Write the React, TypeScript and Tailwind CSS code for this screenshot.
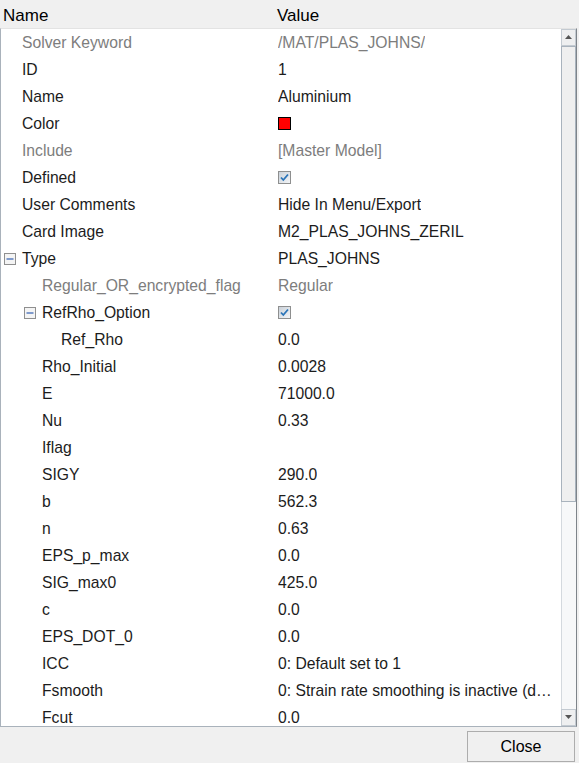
type Row = {
  level: number;
  name: string;
  value?: string;
  dim?: boolean;
  kind?: 'color' | 'check';
  expander?: boolean;
};

const rows: Row[] = [
  { level: 0, name: 'Solver Keyword', value: '/MAT/PLAS_JOHNS/', dim: true },
  { level: 0, name: 'ID', value: '1' },
  { level: 0, name: 'Name', value: 'Aluminium' },
  { level: 0, name: 'Color', kind: 'color' },
  { level: 0, name: 'Include', value: '[Master Model]', dim: true },
  { level: 0, name: 'Defined', kind: 'check' },
  { level: 0, name: 'User Comments', value: 'Hide In Menu/Export' },
  { level: 0, name: 'Card Image', value: 'M2_PLAS_JOHNS_ZERIL' },
  { level: 0, name: 'Type', value: 'PLAS_JOHNS', expander: true },
  { level: 1, name: 'Regular_OR_encrypted_flag', value: 'Regular', dim: true },
  { level: 1, name: 'RefRho_Option', kind: 'check', expander: true },
  { level: 2, name: 'Ref_Rho', value: '0.0' },
  { level: 1, name: 'Rho_Initial', value: '0.0028' },
  { level: 1, name: 'E', value: '71000.0' },
  { level: 1, name: 'Nu', value: '0.33' },
  { level: 1, name: 'Iflag', value: '' },
  { level: 1, name: 'SIGY', value: '290.0' },
  { level: 1, name: 'b', value: '562.3' },
  { level: 1, name: 'n', value: '0.63' },
  { level: 1, name: 'EPS_p_max', value: '0.0' },
  { level: 1, name: 'SIG_max0', value: '425.0' },
  { level: 1, name: 'c', value: '0.0' },
  { level: 1, name: 'EPS_DOT_0', value: '0.0' },
  { level: 1, name: 'ICC', value: '0: Default set to 1' },
  { level: 1, name: 'Fsmooth', value: '0: Strain rate smoothing is inactive (default)' },
  { level: 1, name: 'Fcut', value: '0.0' },
];

const indent = ['pl-[21px]', 'pl-[41px]', 'pl-[60px]'];
const expanderPos = ['left-[3px]', 'left-[23px]'];

const Checkbox = () => (
  <svg width="13" height="13" viewBox="0 0 13 13">
    <defs>
      <linearGradient id="cb" x1="0" y1="0" x2="1" y2="1">
        <stop offset="0" stopColor="#c9d0d8" />
        <stop offset="1" stopColor="#f4f6f8" />
      </linearGradient>
    </defs>
    <rect x="0.5" y="0.5" width="12" height="12" fill="url(#cb)" stroke="#8e8f8f" />
    <path d="M3 6.5 L5.3 9 L10 3.5" fill="none" stroke="#2a74b8" strokeWidth="1.8" />
  </svg>
);

const Expander = () => (
  <svg width="12" height="12" viewBox="0 0 12 12">
    <rect x="0.5" y="0.5" width="11" height="11" fill="#f4f4f4" stroke="#8f8f8f" />
    <path d="M2.5 6 H9.5" stroke="#2f5db0" strokeWidth="1.2" />
  </svg>
);

const PropRow = ({ row }: { row: Row }) => {
  const color = row.dim ? 'text-[#7d7d7d]' : 'text-[#1c1c1c]';
  return (
    <div className={`flex h-[27px] items-center text-[15.7px] ${color}`}>
      <div className={`relative flex h-full w-[276px] shrink-0 items-center ${indent[row.level]}`}>
        {row.expander && (
          <span className={`absolute top-[8px] ${expanderPos[row.level]}`}>
            <Expander />
          </span>
        )}
        <span className="whitespace-nowrap">{row.name}</span>
      </div>
      <div className="flex h-full min-w-0 flex-1 items-center pl-[1px] pr-[1px]">
        {row.kind === 'color' && (
          <span className="block h-[13px] w-[13px] border border-black bg-[#ff0000]" />
        )}
        {row.kind === 'check' && <Checkbox />}
        {row.value !== undefined && <span className="truncate">{row.value}</span>}
      </div>
    </div>
  );
};

const App = () => {
  return (
    <div
      className="flex h-[763px] w-[579px] flex-col overflow-hidden bg-[#f0f0f0]"
      style={{ fontFamily: '"Liberation Sans", Arial, sans-serif' }}
    >
      <div className="flex h-[28px] shrink-0 items-center pt-[3px] text-[17px] text-black">
        <div className="w-[277px] pl-[3px]">Name</div>
        <div>Value</div>
      </div>
      <div className="flex h-[699px] w-[577px] shrink-0 border-t border-l border-b border-r border-t-[#e3e3e3] border-l-[#a9b2bb] border-b-[#a9b2bb] border-r-[#7e848a]">
        <div className="min-w-0 flex-1 overflow-hidden bg-white">
          {rows.map((r) => (
            <PropRow key={r.name} row={r} />
          ))}
        </div>
        <div className="flex w-[15px] shrink-0 flex-col bg-[#f7f8f9]">
          <div className="flex h-[17px] items-center justify-center border border-[#c3cad1] bg-[#eeeff0]">
            <svg width="7" height="5" viewBox="0 0 7 5">
              <path d="M3.5 0 L7 4 L0 4 Z" fill="#555" />
            </svg>
          </div>
          <div className="h-[456px] border border-[#a9b3bd] bg-[#efefef]" />
          <div className="flex-1 border-l border-[#d4d9de]" />
          <div className="flex h-[17px] items-center justify-center border border-[#c3cad1] bg-[#eeeff0]">
            <svg width="7" height="5" viewBox="0 0 7 5">
              <path d="M0 0 L7 0 L3.5 4 Z" fill="#555" />
            </svg>
          </div>
        </div>
      </div>
      <div className="flex flex-1 items-start justify-end pt-[4px] pr-[4px]">
        <button className="h-[31px] w-[108px] border border-[#adadad] bg-[#f0f0f0] text-[16px] text-black">
          Close
        </button>
      </div>
    </div>
  );
};

export default App;
